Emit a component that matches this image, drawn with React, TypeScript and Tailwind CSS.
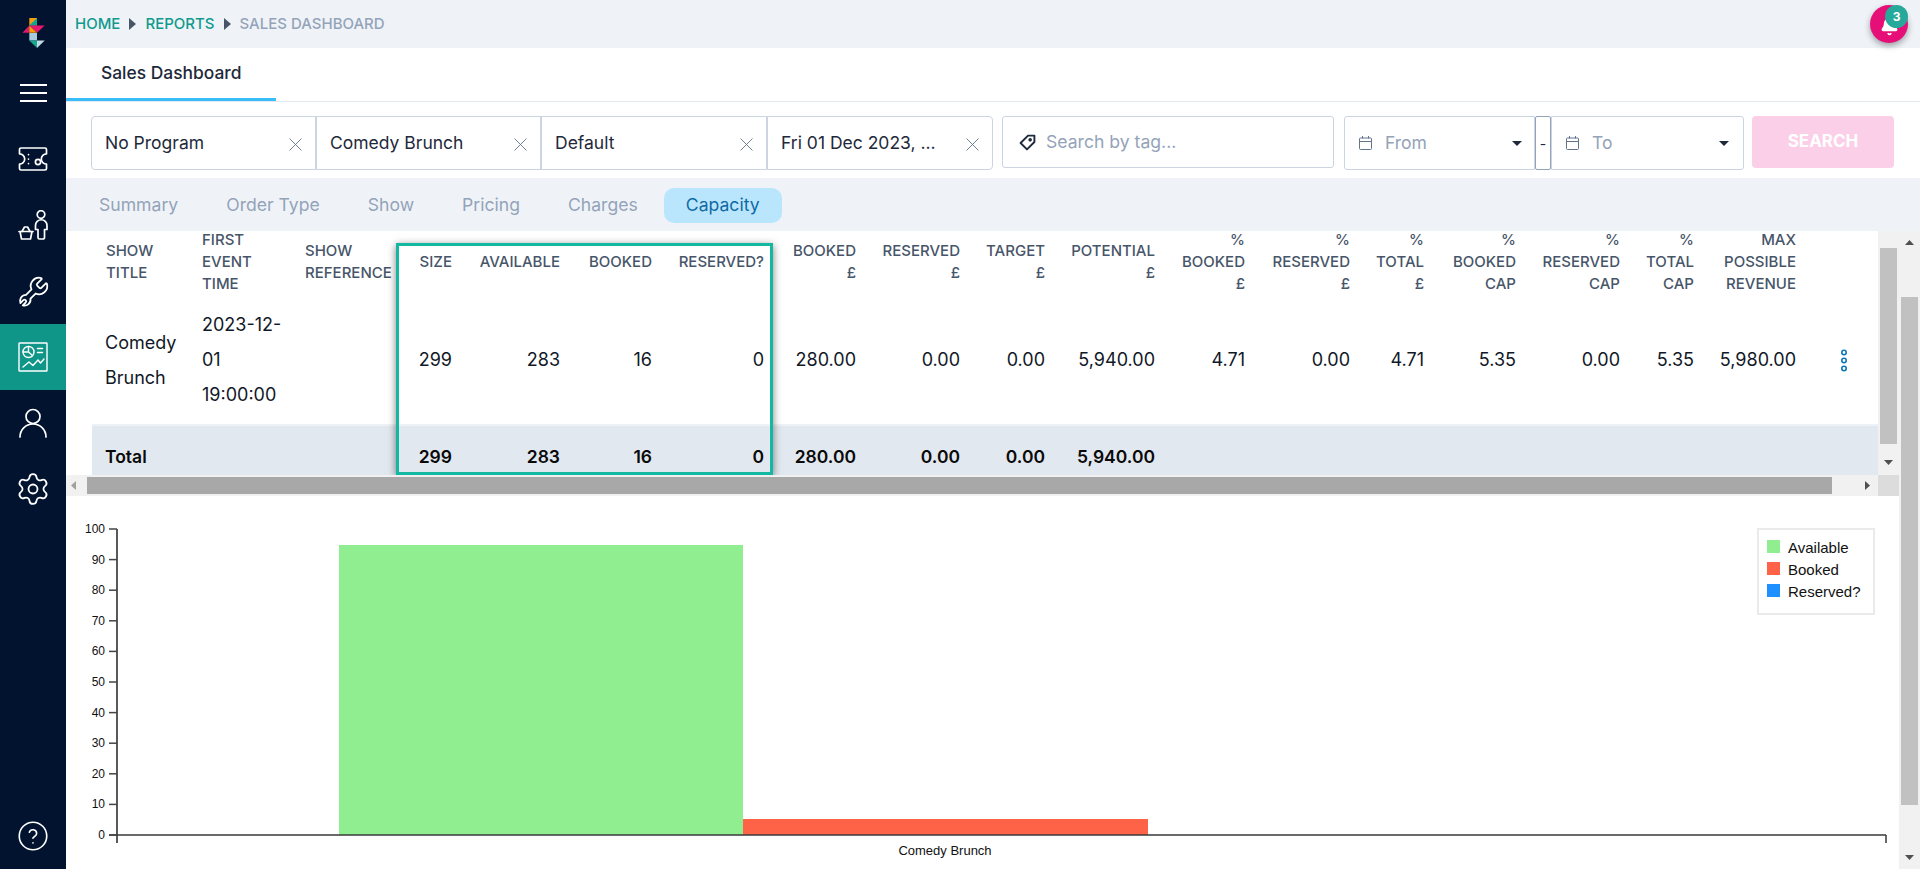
import React from "react";
import { Bell, Settings } from "lucide-react";

const Icon = ({ children, vb = "0 0 30 30", cls = "w-[30px] h-[30px]", sw = 1.7 }: any) => (
  <svg viewBox={vb} className={cls} fill="none" stroke="#fff" strokeWidth={sw} strokeLinecap="round" strokeLinejoin="round">
    {children}
  </svg>
);

const Logo = () => (
  <svg viewBox="0 0 66 50" className="w-[66px] h-[50px]">
    <polygon points="29.3,8 37,8 37,15.5 29.3,15.5" fill="#f59e0b" />
    <polygon points="37,8 37,15.5 29.3,15.5" fill="#12a594" />
    <polygon points="22.5,22.8 29.3,15.5 29.3,22.8" fill="#e6176f" />
    <polygon points="29.3,15.5 44.7,15.5 37,22.8" fill="#e6176f" />
    <polygon points="29.3,15.5 37,22.8 29.3,22.8" fill="#f59e0b" />
    <rect x="29.3" y="23" width="7.7" height="7.5" fill="#a9c9dd" />
    <polygon points="29.3,30.5 37,30.5 37,38" fill="#14a88e" />
    <polygon points="37,30.5 44.7,30.5 37,38" fill="#c4d9e6" />
  </svg>
);

const Nav = ({ children, active }: any) => (
  <div className={active ? "h-[66px] w-full flex items-center justify-center bg-[#0f9688]" : "h-[66px] w-full flex items-center justify-center"}>
    {children}
  </div>
);

const Sidebar = () => (
  <aside className="w-[66px] h-full shrink-0 bg-[#02132f] flex flex-col items-center pt-[10px]">
    <Logo />
    <Nav>
      <div className="w-[27px] flex flex-col gap-[6px]">
        <div className="h-[2px] bg-white" />
        <div className="h-[2px] bg-white" />
        <div className="h-[2px] bg-white" />
      </div>
    </Nav>
    <Nav>
      <Icon>
        <path d="M3 4h24a1.5 1.5 0 0 1 1.5 1.5v4.3a5.2 5.2 0 0 0 0 10.400v4.300a1.500 1.500 0 0 1-1.500 1.500H3a1.500 1.500 0 0 1-1.500-1.500v-4.300a5.200 5.200 0 0 0 0-10.400V5.500A1.500 1.500 0 0 1 3 4z" />
        <path d="M10.500 10.500v.1M10.500 15v.1M10.500 19.500v.1" />
        <circle cx="20" cy="18" r="2.600" />
      </Icon>
    </Nav>
    <Nav>
      <Icon>
        <circle cx="23" cy="4.500" r="3.800" />
        <path d="M17.500 15.500a5.700 5.700 0 0 1 11.500 0v4h-2.500v8a1.500 1.500 0 0 1-1.500 1.500h-3.500a1.500 1.500 0 0 1-1.500-1.500v-8h-2.500z" />
        <path d="M1 21.500h14M2 21.500l1.500 7.500h9l1.500-7.500" />
        <path d="M4 21.500l2.500-4.500h3l2.500 4.500" />
      </Icon>
    </Nav>
    <Nav>
      <Icon vb="0 0 24 24" cls="w-[33px] h-[33px]" sw={1.3}>
        <path d="M14.700 6.300a1 1 0 0 0 0 1.400l1.600 1.600a1 1 0 0 0 1.400 0l3.106-3.105c.32-.322.863-.22.983.218a6 6 0 0 1-8.259 7.057L9.800 17.200a4.400 4.400 0 0 1-5.600 4.900l2.100-2.100a1.200 1.200 0 0 0-1.700-1.700l-2.100 2.100a4.400 4.400 0 0 1 4.100-6l3.930-3.930a6 6 0 0 1 7.057-8.259c.438.12.54.662.219.984z" />
      </Icon>
    </Nav>
    <Nav active>
      <Icon sw={1.4}>
        <rect x="1" y="1" width="28" height="28" rx="0.500" />
        <circle cx="10.500" cy="10" r="5.500" />
        <path d="M10.500 4.500V10l4 3.500M10.500 10H5" />
        <path d="M19.500 6.500h5M19.500 10.500h5" />
        <path d="M5 25l6-5 4 3.500 5-5.500 2.500 3 3.500-4" />
      </Icon>
    </Nav>
    <Nav>
      <Icon sw={1.7}>
        <circle cx="15" cy="8.500" r="7" />
        <path d="M2 29c0-7 5.500-13 13-13s13 6 13 13" />
      </Icon>
    </Nav>
    <Nav>
      <Settings className="w-[36px] h-[36px]" color="#fff" strokeWidth={1.200} />
    </Nav>
    <div className="mt-auto mb-[18px]">
      <Icon vb="0 0 24 24" sw={1.3}>
        <circle cx="12" cy="12" r="11" />
        <path d="M9.090 9a3 3 0 0 1 5.830 1c0 2-3 3-3 3.800" />
        <path d="M12 17.500h.01" />
      </Icon>
    </div>
  </aside>
);

const Tri = ({ dir, cls, color = "#475569" }: any) => {
  const pts = dir === "r" ? "0,0 10,5 0,10" : dir === "l" ? "10,0 0,5 10,10" : dir === "u" ? "0,10 5,0 10,10" : "0,0 10,0 5,10";
  return (
    <svg viewBox="0 0 10 10" preserveAspectRatio="none" className={cls}>
      <polygon points={pts} fill={color} />
    </svg>
  );
};

const Close = () => (
  <svg viewBox="0 0 13 13" className="w-[13px] h-[13px] mt-[3px] shrink-0" stroke="#64748b" strokeWidth={0.9}>
    <path d="M.5.5l12 12M12.500.5l-12 12" />
  </svg>
);

const Cal = () => (
  <svg viewBox="0 0 13 14" className="w-[13px] h-[14px] shrink-0" fill="none" stroke="#64748b" strokeWidth={1}>
    <rect x=".5" y="2" width="12" height="11.500" rx="1" />
    <path d="M.5 5.500h12M3.500 0v2.500M9.500 0v2.500" />
  </svg>
);

const Filter = ({ text, cls }: any) => (
  <div className={`h-[54px] border border-[#cbd5e1] bg-white flex items-center justify-between pl-[13px] pr-[13px] ${cls}`}>
    <span className="text-[17.500px] text-[#1e293b] whitespace-nowrap">{text}</span>
    <Close />
  </div>
);

const colWidths = ["w-[96px]", "w-[103px]", "w-[114px]", "w-[60px]", "w-[108px]", "w-[92px]", "w-[112px]", "w-[92px]", "w-[104px]", "w-[85px]", "w-[110px]", "w-[91px]", "w-[105px]", "w-[74px]", "w-[92px]", "w-[104px]", "w-[74px]", "w-[102px]", "w-[68px]"];
const heads = [
  ["SHOW", "TITLE"], ["FIRST", "EVENT", "TIME"], ["SHOW", "REFERENCE"], ["SIZE"], ["AVAILABLE"], ["BOOKED"], ["RESERVED?"],
  ["BOOKED", "£"], ["RESERVED", "£"], ["TARGET", "£"], ["POTENTIAL", "£"],
  ["%", "BOOKED", "£"], ["%", "RESERVED", "£"], ["%", "TOTAL", "£"], ["%", "BOOKED", "CAP"], ["%", "RESERVED", "CAP"], ["%", "TOTAL", "CAP"],
  ["MAX", "POSSIBLE", "REVENUE"], [""],
];
const row = ["299", "283", "16", "0", "280.00", "0.00", "0.00", "5,940.00", "4.71", "0.00", "4.71", "5.35", "0.00", "5.35", "5,980.00"];
const totals = ["299", "283", "16", "0", "280.00", "0.00", "0.00", "5,940.00", "", "", "", "", "", "", ""];

const Lines = ({ l }: { l: string[] }) => (
  <>
    {l.map((t, i) => (
      <span key={i} className="block">{t}</span>
    ))}
  </>
);

const headLeft = "p-0 pl-[14px] text-left align-middle text-[15px] leading-[22px] font-medium text-[#475569] whitespace-nowrap";
const headNear = "p-0 pr-[13px] text-right align-middle text-[15px] leading-[22px] font-medium text-[#475569] whitespace-nowrap";
const headRight = "p-0 pr-[14px] text-right align-middle text-[15px] leading-[22px] font-medium text-[#475569] whitespace-nowrap";
const cellNear = "p-0 pr-[13px] text-right text-[18px] leading-[35px] text-[#111827] whitespace-nowrap";
const cellRight = "p-0 pr-[14px] text-right text-[18px] leading-[35px] text-[#111827] whitespace-nowrap";

const Table = () => (
  <table className="table-fixed w-[1786px] -mt-[2px] border-collapse">
    <colgroup>
      {colWidths.map((c, i) => (
        <col key={i} className={c} />
      ))}
    </colgroup>
    <thead>
      <tr className="h-[66px]">
        {heads.map((h, i) => (
          <th key={i} className={i < 3 ? headLeft : i <= 10 ? headNear : headRight}>
            <Lines l={h} />
          </th>
        ))}
      </tr>
    </thead>
    <tbody>
      <tr className="h-[130px]">
        <td className="p-0 pl-[13px] text-[18px] leading-[35px] text-[#111827] whitespace-nowrap"><Lines l={["Comedy", "Brunch"]} /></td>
        <td className="p-0 pl-[14px] text-[18px] leading-[35px] text-[#111827] whitespace-nowrap"><Lines l={["2023-12-", "01", "19:00:00"]} /></td>
        <td className="p-0" />
        {row.map((v, i) => (
          <td key={i} className={i <= 7 ? cellNear : cellRight}>{v}</td>
        ))}
        <td className="p-0 text-center">
          <svg viewBox="0 0 8 23" className="w-[8px] h-[23px] inline-block" fill="none" stroke="#0b76b8" strokeWidth={1.600}>
            <circle cx="4" cy="3.500" r="2.200" />
            <circle cx="4" cy="11.500" r="2.200" />
            <circle cx="4" cy="19.500" r="2.200" />
          </svg>
        </td>
      </tr>
      <tr className="h-[64px] bg-[#e2e8f0] border-t-2 border-[#eef1f6]">
        <td className="p-0 pl-[13px] text-[17.500px] font-semibold text-[#0a0a0a]">Total</td>
        <td className="p-0" />
        <td className="p-0" />
        {totals.map((v, i) => (
          <td key={i} className="p-0 pr-[13px] text-right text-[17.500px] font-semibold text-[#0a0a0a] whitespace-nowrap">{v}</td>
        ))}
        <td className="p-0" />
      </tr>
    </tbody>
  </table>
);

const Chart = () => {
  const ticks = [0, 10, 20, 30, 40, 50, 60, 70, 80, 90, 100];
  const lbl = { fontFamily: "'Liberation Sans', Arial, sans-serif" };
  return (
    <svg viewBox="66 496 1833 373" className="w-[1833px] h-[373px] block">
      <rect x="339" y="545" width="404" height="290" fill="#90ee90" />
      <rect x="743" y="819" width="405" height="16" fill="#ff6347" />
      <path d="M117 529V843" stroke="#222" strokeWidth={1.500} fill="none" />
      <path d="M109 835H1886M1886 835v8" stroke="#3a3a3a" strokeWidth={1.500} fill="none" />
      {ticks.map((t) => {
        const y = 835 - t * 3.06;
        return (
          <g key={t}>
            <path d={`M109 ${y}H117`} stroke="#444" strokeWidth={1.500} />
            <text x="105" y={y + 4} textAnchor="end" fontSize="12" fill="#111" style={lbl}>{t}</text>
          </g>
        );
      })}
      <text x="945" y="855" textAnchor="middle" fontSize="13" fill="#111" style={lbl}>Comedy Brunch</text>
      <rect x="1758" y="529" width="116" height="85" fill="#fff" stroke="#eaeaea" strokeWidth={2} />
      {[["Available", "#90ee90", 540], ["Booked", "#ff6347", 562], ["Reserved?", "#1e90ff", 584]].map(([t, c, y]: any) => (
        <g key={t}>
          <rect x="1767" y={y} width="13" height="13" fill={c} />
          <text x="1788" y={y + 13} fontSize="15" fill="#111" style={lbl}>{t}</text>
        </g>
      ))}
    </svg>
  );
};

export default function App() {
  return (
    <div className="flex w-[1920px] h-[869px] overflow-hidden bg-white font-['Inter','Liberation_Sans',sans-serif]">
      <Sidebar />
      <main className="flex-1 min-w-0 flex flex-col">
        <header className="h-[48px] bg-[#eff3f8] flex items-center justify-between pl-[9px] pr-[12px]">
          <nav className="flex items-center text-[15px] font-medium whitespace-nowrap">
            <span className="text-[#0f9a8c]">HOME</span>
            <Tri dir="r" cls="w-[7px] h-[12px] mx-[9px]" />
            <span className="text-[#0f9a8c]">REPORTS</span>
            <Tri dir="r" cls="w-[7px] h-[12px] mx-[9px]" />
            <span className="text-[#94a3b8]">SALES DASHBOARD</span>
          </nav>
          <div className="relative w-[38px] h-[38px] rounded-full bg-[#e60f78] shadow-[0_3px_6px_rgba(0,0,0,0.35)] flex items-center justify-center">
            <Bell className="w-[19px] h-[19px] mt-[4px]" fill="#fff" color="#fff" />
            <span className="absolute right-0 top-0 w-[23px] h-[23px] rounded-full bg-[#26a99a] text-white text-[12px] font-bold flex items-center justify-center">3</span>
          </div>
        </header>

        <div className="h-[54px] border-b border-[#e2e8f0] flex">
          <div className="w-[210px] h-[53px] border-b-[3px] border-[#38bdf8] flex items-center pl-[35px] text-[17.400px] font-medium text-[#1e293b] whitespace-nowrap">
            Sales Dashboard
          </div>
        </div>

        <div className="h-[76px] flex items-start pl-[25px] pt-[14px]">
          <div className="flex">
            <Filter text="No Program" cls="w-[225px] rounded-l-[4px]" />
            <Filter text="Comedy Brunch" cls="w-[225px]" />
            <Filter text="Default" cls="w-[226px]" />
            <Filter text="Fri 01 Dec 2023, ..." cls="w-[226px] rounded-r-[4px]" />
          </div>
          <div className="ml-[9px] w-[332px] h-[52px] border border-[#cbd5e1] rounded-[3px] flex items-center pl-[16px] gap-[10px]">
            <svg viewBox="0 0 16 16" className="w-[17px] h-[17px] shrink-0" fill="none" stroke="#1e293b" strokeWidth={1.800} strokeLinejoin="round">
              <path d="M8.500 1.500h6v6l-7 7-6-6z" />
              <circle cx="10.500" cy="5.500" r=".8" fill="#1e293b" />
            </svg>
            <span className="text-[17.600px] text-[#94a3b8] whitespace-nowrap">Search by tag...</span>
          </div>
          <div className="ml-[10px] flex h-[54px]">
            <div className="w-[191px] border border-[#cbd5e1] rounded-l-[3px] flex items-center pl-[14px] pr-[12px]">
              <Cal />
              <span className="ml-[13px] text-[17.500px] text-[#94a3b8]">From</span>
              <Tri dir="d" cls="ml-auto w-[10px] h-[5px]" color="#1e293b" />
            </div>
            <div className="w-[16px] border border-[#94a3b8] rounded-[2px] flex items-center justify-center text-[14px] text-[#1e293b]">-</div>
            <div className="w-[193px] border border-[#cbd5e1] rounded-r-[3px] flex items-center pl-[14px] pr-[14px]">
              <Cal />
              <span className="ml-[13px] text-[17.500px] text-[#94a3b8]">To</span>
              <Tri dir="d" cls="ml-auto w-[10px] h-[5px]" color="#1e293b" />
            </div>
          </div>
          <div className="ml-[8px] w-[142px] h-[52px] rounded-[4px] bg-[#fbcfe8] flex items-center justify-center text-white text-[17px] font-bold">SEARCH</div>
        </div>

        <div className="h-[53px] bg-[#eff3f8] flex items-center pl-[11px] pt-[1px] gap-[4px]">
          {["Summary", "Order Type", "Show", "Pricing", "Charges"].map((t) => (
            <span key={t} className="px-[22px] text-[17.600px] text-[#94a3b8] whitespace-nowrap">{t}</span>
          ))}
          <span className="h-[35px] px-[22px] rounded-[10px] bg-[#bae6fd] text-[17.600px] text-[#0f6aa5] flex items-center whitespace-nowrap">Capacity</span>
        </div>

        <div className="flex flex-1 min-h-0">
          <div className="w-[1833px] flex flex-col">
            <div className="h-[244px] flex">
              <div className="relative w-[1812px] pl-[26px] overflow-hidden">
                <Table />
                <div className="absolute left-[330px] top-[12px] w-[377px] h-[232px] border-[3px] border-[#14b8a0] shadow-[0_2px_8px_rgba(0,0,0,0.5)]" />
              </div>
              <div className="w-[21px] bg-[#f1f1f1] flex flex-col items-center">
                <div className="mt-[17px] w-[17px] h-[196px] bg-[#c1c1c1]" />
                <Tri dir="d" cls="mt-[16px] w-[9px] h-[5px]" color="#505050" />
              </div>
            </div>
            <div className="h-[21px] flex">
              <div className="w-[1812px] bg-[#f1f1f1] flex items-center">
                <Tri dir="l" cls="ml-[5px] w-[5px] h-[9px]" color="#a0a0a0" />
                <div className="ml-[11px] w-[1745px] h-[17px] bg-[#a8a8a8]" />
                <Tri dir="r" cls="ml-[33px] w-[5px] h-[9px]" color="#505050" />
              </div>
              <div className="w-[21px] bg-[#dcdcdc]" />
            </div>
            <Chart />
          </div>
          <div className="w-[21px] bg-[#f1f1f1] flex flex-col items-center pt-[9px]">
            <Tri dir="u" cls="w-[9px] h-[5px]" color="#505050" />
            <div className="mt-[52px] w-[17px] h-[508px] bg-[#c1c1c1]" />
            <Tri dir="d" cls="mt-[50px] w-[9px] h-[5px]" color="#505050" />
          </div>
        </div>
      </main>
    </div>
  );
}
